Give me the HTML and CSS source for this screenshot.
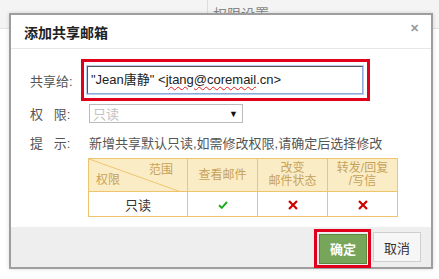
FILE: index.html
```html
<!DOCTYPE html>
<html lang="zh-CN">
<head>
<meta charset="UTF-8">
<title>添加共享邮箱</title>
<link rel="stylesheet" href="styles.css">
</head>
<body>
<div class="page-top">
  <div class="top-left"></div>
  <div class="top-right">权限设置</div>
</div>

<div class="dialog">
  <div class="dialog-head">
    <span class="dialog-title">添加共享邮箱</span>
    <span class="dialog-close">&#10005;</span>
  </div>
  <div class="dialog-body">
    <div class="row">
      <span class="label">共享给:</span>
      <div class="mark mark-input">
        <div class="share-input">"Jean唐静" &lt;<span class="spell">jtang@coremail</span>.cn&gt;</div>
      </div>
    </div>
    <div class="row row-select">
      <span class="label">权&nbsp;&nbsp;&nbsp;限:</span>
      <div class="select">
        <span class="placeholder">只读</span>
        <span class="arrow">&#9660;</span>
      </div>
    </div>
    <div class="row row-tip">
      <span class="label">提&nbsp;&nbsp;&nbsp;示:</span>
      <span class="tip">新增共享默认只读,如需修改权限,请确定后选择修改</span>
    </div>
    <table class="perm-table">
      <tr class="head">
        <th class="diag">
          <svg class="diag-line" viewBox="0 0 98 33" preserveAspectRatio="none"><line x1="0" y1="0" x2="92" y2="33" stroke="#f0c46f" stroke-width="1"/></svg>
          <span class="diag-top">范围</span>
          <span class="diag-bottom">权限</span>
        </th>
        <th>查看邮件</th>
        <th>改变<br>邮件状态</th>
        <th>转发/回复<br>/写信</th>
      </tr>
      <tr>
        <td class="name">只读</td>
        <td><svg width="10" height="8" viewBox="0 0 10 8"><path d="M1 4.2 L3.8 6.8 L9 1" fill="none" stroke="#22aa22" stroke-width="2"/></svg></td>
        <td><svg width="10" height="10" viewBox="0 0 10 10"><path d="M1 1 L9 9 M9 1 L1 9" stroke="#cc0000" stroke-width="2.2"/></svg></td>
        <td><svg width="10" height="10" viewBox="0 0 10 10"><path d="M1 1 L9 9 M9 1 L1 9" stroke="#cc0000" stroke-width="2.2"/></svg></td>
      </tr>
    </table>
  </div>
  <div class="dialog-foot">
    <div class="mark mark-btn">
      <button class="btn btn-ok">确定</button>
    </div>
    <button class="btn btn-cancel">取消</button>
  </div>
</div>
</body>
</html>
```

FILE: styles.css
```css
body {
  margin: 0;
  background: #fff;
  font-family: "Liberation Sans", "Noto Sans CJK SC", sans-serif;
  color: #555;
}

.page-top {
  display: flex;
  height: 28px;
  background: #f4f4f4;
  border-bottom: 1px solid #e2e2e2;
}

.top-left {
  width: 207px;
  border-right: 1px solid #dcdcdc;
  height: 14px;
}

.top-right {
  padding: 3px 0 0 5px;
  font-size: 14px;
  color: #888;
}

.dialog {
  position: absolute;
  left: 9px;
  top: 13px;
  width: 420px;
  border: 2px solid #9e9e9e;
  background: #fff;
  box-shadow: 0 0 4px rgba(0, 0, 0, 0.15);
}

.dialog-head {
  display: flex;
  justify-content: space-between;
  align-items: center;
  height: 33px;
  padding: 0 12px 0 13px;
  border-bottom: 1px solid #e6e6e6;
}

.dialog-title {
  font-size: 14px;
  font-weight: bold;
  color: #222;
}

.dialog-close {
  font-size: 11px;
  font-weight: bold;
  color: #999;
  margin-top: -6px;
}

.dialog-body {
  height: 168px;
  padding: 10px 0 0 19px;
}

.row {
  display: flex;
  align-items: center;
}

.label {
  width: 51px;
  font-size: 13px;
  color: #555;
}

.mark {
  border: 3px solid #e0001b;
}

.mark-input {
  padding: 4px 4px 4px 3px;
}

.share-input {
  width: 271px;
  height: 26px;
  line-height: 26px;
  padding-left: 3px;
  font-size: 13px;
  color: #222;
  border: 1px solid #8cabdc;
  border-top-color: #555;
  border-left-color: #555;
  box-shadow: 0 0 0 1px #b9cdee;
}

.spell {
  text-decoration: underline wavy #e02020;
  text-decoration-thickness: 1px;
  text-underline-offset: 2px;
}

.row-select {
  margin-top: 3px;
}

.select {
  display: flex;
  justify-content: space-between;
  align-items: center;
  width: 145px;
  height: 17px;
  margin-left: 8px;
  padding: 0 4px 0 3px;
  border: 1px solid #bbb;
  font-size: 13px;
}

.placeholder {
  color: #c2c2c2;
}

.arrow {
  font-size: 9px;
  color: #111;
}

.row-tip {
  margin-top: 11px;
  line-height: 20px;
}

.tip {
  margin-left: 8px;
  font-size: 13px;
  color: #555;
}

.perm-table {
  margin: 4px 0 0 58px;
  border-collapse: collapse;
  font-size: 12px;
  text-align: center;
}

.perm-table th,
.perm-table td {
  border: 1px solid #efc46e;
  padding: 0;
}

.perm-table th {
  height: 32px;
  width: 69px;
  background: #faedc6;
  color: #c8a25a;
  font-weight: normal;
  line-height: 13px;
}

.perm-table td {
  height: 24px;
  color: #333;
}

.perm-table td svg {
  vertical-align: middle;
}

.perm-table .diag {
  position: relative;
  width: 98px;
}

.diag-line {
  position: absolute;
  left: 0;
  top: 0;
  width: 98px;
  height: 33px;
}

.diag-top {
  position: absolute;
  right: 14px;
  top: 5px;
  font-size: 12px;
}

.diag-bottom {
  position: absolute;
  left: 7px;
  bottom: 4px;
  font-size: 12px;
}

.perm-table .name {
  font-size: 13px;
}

.dialog-foot {
  display: flex;
  justify-content: flex-end;
  align-items: center;
  gap: 2px;
  height: 40px;
  padding-right: 10px;
  background: #eeeeee;
}

.mark-btn {
  padding: 2px 1px 1px 2px;
  margin-top: 2px;
}

.btn {
  width: 48px;
  height: 30px;
  font-family: "Liberation Sans", "Noto Sans CJK SC", sans-serif;
  font-size: 13px;
  padding: 0;
}

.btn-ok {
  display: block;
  background: #77a55a;
  border: 1px solid #5b8a3f;
  color: #fff;
  font-weight: bold;
}

.btn-cancel {
  background: #f6f6f6;
  border: 1px solid #cfcfcf;
  color: #333;
}
```
